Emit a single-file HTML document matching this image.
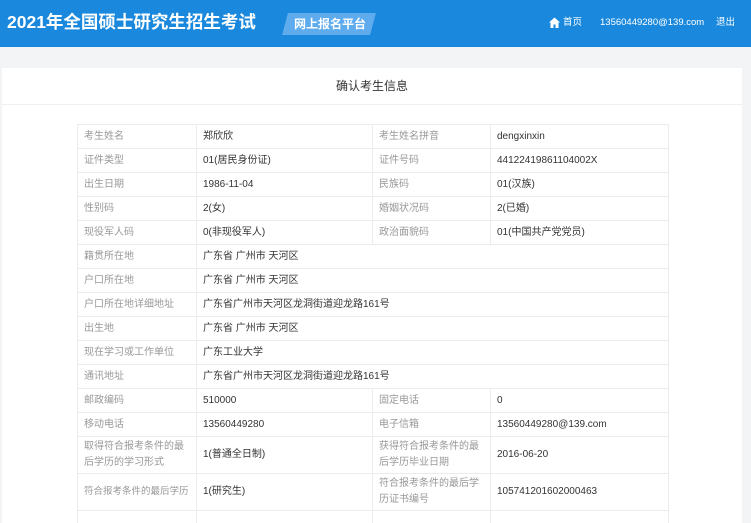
<!DOCTYPE html>
<html><head><meta charset="utf-8"><style>
*{margin:0;padding:0;box-sizing:border-box}
html,body{width:751px;height:523px;overflow:hidden}
body{background:#f3f4f5;font-family:"Liberation Sans","Noto Sans CJK SC",sans-serif;position:relative}
.hd{position:absolute;left:0;top:0;width:751px;height:47px;background:#1a89dd}
.t{position:absolute;left:7px;top:10px;line-height:24px;color:#fff;font-size:17.5px;font-weight:bold;white-space:nowrap}
.bd{position:absolute;left:285px;top:13px;width:88px;height:22px;background:#5eabee;transform:skewX(-15deg)}
.bdt{position:absolute;left:294px;top:13px;line-height:22px;color:#fff;font-size:12px;font-weight:bold}
.nav{position:absolute;top:16px;line-height:14px;color:#fff;font-size:9.5px;white-space:nowrap}
.panel{position:absolute;left:2px;top:68px;width:740px;height:460px;background:#fff}
.ttl{position:absolute;left:0;top:0;width:740px;height:37px;border-bottom:1px solid #eef0f2;text-align:center;line-height:37px;font-size:12px;color:#333}
table{position:absolute;left:75px;top:56px;border-collapse:collapse;font-size:10px;table-layout:fixed;width:591px}
td{border:1px solid #ececec;height:24px;padding:0 6px;color:#333;vertical-align:middle;line-height:14px;white-space:nowrap;overflow:hidden}
td.l{color:#999}
tr.tall td{height:37px;line-height:16px;white-space:normal}
tr.tall td.nw{white-space:nowrap}
</style></head><body>
<div class="hd">
<div class="t">2021年全国硕士研究生招生考试</div>
<div class="bd"></div><div class="bdt">网上报名平台</div>
<svg style="position:absolute;left:549px;top:17px" width="11" height="11" viewBox="0 0 11 11"><path d="M5.5 0.5L0 5.5h1.5V11h3V7.5h2V11h3V5.5H11z" fill="#fff"/></svg>
<div class="nav" style="left:563px">首页</div>
<div class="nav" style="left:600px">13560449280@139.com</div>
<div class="nav" style="left:716px">退出</div>
</div>
<div class="panel">
<div class="ttl">确认考生信息</div>
<table>
<colgroup><col style="width:119px"><col style="width:176px"><col style="width:118px"><col style="width:178px"></colgroup>
<tr><td class="l">考生姓名</td><td>郑欣欣</td><td class="l">考生姓名拼音</td><td>dengxinxin</td></tr>
<tr><td class="l">证件类型</td><td>01(居民身份证)</td><td class="l">证件号码</td><td>44122419861104002X</td></tr>
<tr><td class="l">出生日期</td><td>1986-11-04</td><td class="l">民族码</td><td>01(汉族)</td></tr>
<tr><td class="l">性别码</td><td>2(女)</td><td class="l">婚姻状况码</td><td>2(已婚)</td></tr>
<tr><td class="l">现役军人码</td><td>0(非现役军人)</td><td class="l">政治面貌码</td><td>01(中国共产党党员)</td></tr>
<tr><td class="l">籍贯所在地</td><td colspan="3">广东省 广州市 天河区</td></tr>
<tr><td class="l">户口所在地</td><td colspan="3">广东省 广州市 天河区</td></tr>
<tr><td class="l">户口所在地详细地址</td><td colspan="3">广东省广州市天河区龙洞街道迎龙路161号</td></tr>
<tr><td class="l">出生地</td><td colspan="3">广东省 广州市 天河区</td></tr>
<tr><td class="l">现在学习或工作单位</td><td colspan="3">广东工业大学</td></tr>
<tr><td class="l">通讯地址</td><td colspan="3">广东省广州市天河区龙洞街道迎龙路161号</td></tr>
<tr><td class="l">邮政编码</td><td>510000</td><td class="l">固定电话</td><td>0</td></tr>
<tr><td class="l">移动电话</td><td>13560449280</td><td class="l">电子信箱</td><td>13560449280@139.com</td></tr>
<tr class="tall"><td class="l">取得符合报考条件的最后学历的学习形式</td><td>1(普通全日制)</td><td class="l">获得符合报考条件的最后学历毕业日期</td><td>2016-06-20</td></tr>
<tr class="tall"><td class="l nw" style="font-size:9.5px;padding:0 4px 0 6px">符合报考条件的最后学历</td><td>1(研究生)</td><td class="l">符合报考条件的最后学历证书编号</td><td>105741201602000463</td></tr>
<tr><td class="l">&nbsp;</td><td></td><td></td><td></td></tr>
</table>
</div>
</body></html>
